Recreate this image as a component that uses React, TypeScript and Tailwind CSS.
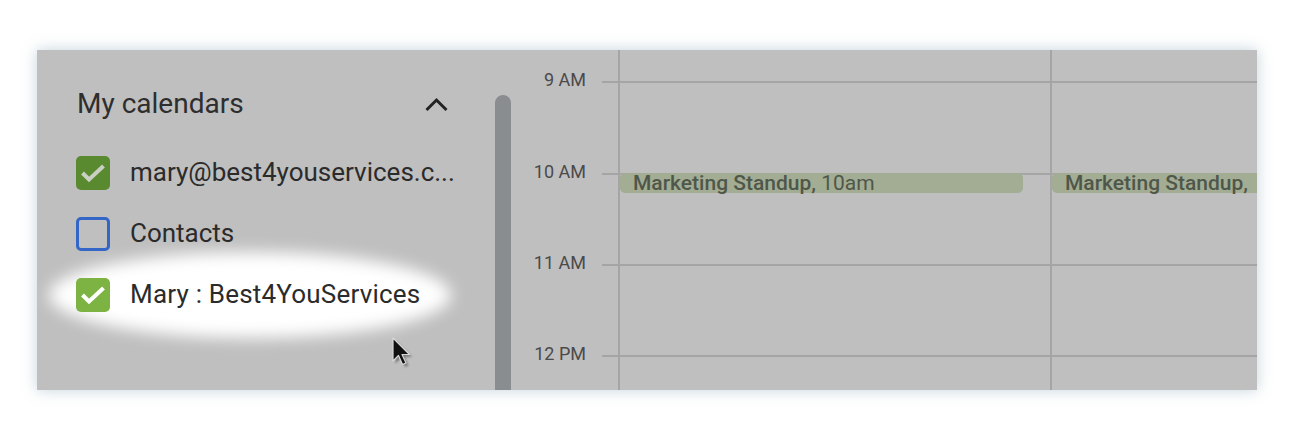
import React from "react";

function Check({ bg, tick }: { bg: string; tick: string }) {
  return (
    <div className={`w-[34px] h-[34px] rounded-[5px] shrink-0 ${bg}`}>
      <svg width="34" height="34" viewBox="0 0 34 34">
        <path d="M6.5 17 L13 23.5 L27.5 10" fill="none" stroke={tick} strokeWidth="4" strokeLinecap="butt" />
      </svg>
    </div>
  );
}

function TimeRow({ label, h, children }: { label: string; h: string; children?: React.ReactNode }) {
  return (
    <div className={`flex ${h} shrink-0`}>
      <div className="w-[107px] flex shrink-0">
        <div className="w-[75px] text-right text-[18px] leading-[24px] h-[24px] -mt-[13px] text-[#4a4a4a]">{label}</div>
        <div className="w-[16px]" />
        <div className="w-[16px] border-t-2 border-[#a5a5a5]" />
      </div>
      <div className="w-[432px] shrink-0 border-t-2 border-l-2 border-[#a5a5a5]">{children}</div>
      <div className="flex-1 border-t-2 border-l-2 border-[#a5a5a5] min-w-0">{children ? <Event short /> : null}</div>
    </div>
  );
}

function Event({ short }: { short?: boolean }) {
  return (
    <div
      className={`-mt-[2px] h-[20px] bg-[#a3ad94] text-[21px] leading-[20px] pl-[13px] whitespace-nowrap text-[#4f574a] ${
        short ? "rounded-l-[5px]" : "rounded-[5px] mr-[27px]"
      }`}
    >
      <span className="font-medium">Marketing Standup,</span>
      {short ? null : <span> 10am</span>}
    </div>
  );
}

export default function App() {
  return (
    <div className="w-[1295px] h-[440px] bg-white relative" style={{ fontFamily: "Roboto, 'Liberation Sans', sans-serif" }}>
      <div className="absolute left-[37px] top-[50px] w-[1220px] h-[340px] bg-[#bfbfbf] shadow-[0_0_14px_rgba(90,130,150,0.35)] overflow-hidden flex">
        {/* glow ellipse */}
        <div className="absolute left-[12px] top-[202px] w-[402px] h-[86px] rounded-[50%] bg-white blur-[8px]" />

        {/* sidebar */}
        <div className="relative w-[458px] shrink-0 pl-[40px] pt-[34px] flex flex-col">
          <div className="flex items-center justify-between w-[370px] h-[40px]">
            <span className="text-[28px] text-[#2e2e2e]">My calendars</span>
            <svg width="23" height="15" viewBox="0 0 23 15" className="-mr-[1px]">
              <polyline points="1.5,13 11.5,3 21.5,13" fill="none" stroke="#232323" strokeWidth="3" />
            </svg>
          </div>
          <div className="mt-[18px] flex flex-col">
            <div className="h-[61px] flex items-center gap-[20px] -ml-[1px]">
              <Check bg="bg-[#5a8a30]" tick="#c9cfc3" />
              <span className="text-[26px] text-[#2b2b2b] whitespace-nowrap">mary@best4youservices.c...</span>
            </div>
            <div className="h-[61px] flex items-center gap-[20px] -ml-[1px]">
              <div className="w-[34px] h-[34px] rounded-[5px] border-[3px] border-[#3366c6] shrink-0" />
              <span className="text-[26px] text-[#2b2b2b]">Contacts</span>
            </div>
            <div className="h-[61px] flex items-center gap-[20px] -ml-[1px]">
              <Check bg="bg-[#7cb342]" tick="#ffffff" />
              <span className="text-[26px] text-[#2b2b2b] tracking-[0.2px]">Mary : Best4YouServices</span>
            </div>
          </div>
        </div>

        {/* scrollbar */}
        <div className="w-[16px] shrink-0 mt-[45px] rounded-t-full bg-[#8a8d90]" />

        {/* grid */}
        <div className="flex-1 flex flex-col min-w-0">
          <div className="flex h-[31px] shrink-0">
            <div className="w-[107px] shrink-0" />
            <div className="w-[432px] shrink-0 border-l-2 border-[#a5a5a5]" />
            <div className="flex-1 border-l-2 border-[#a5a5a5]" />
          </div>
          <TimeRow label="9 AM" h="h-[92px]" />
          <TimeRow label="10 AM" h="h-[91px]">
            <Event />
          </TimeRow>
          <TimeRow label="11 AM" h="h-[91px]" />
          <TimeRow label="12 PM" h="h-[91px]" />
        </div>

        {/* cursor */}
        <svg className="absolute left-[354px] top-[286px]" width="24" height="34" viewBox="0 0 24 34">
          <defs>
            <filter id="cs" x="-30%" y="-30%" width="160%" height="160%">
              <feGaussianBlur stdDeviation="0.8" />
            </filter>
          </defs>
          <path d="M3 3 L3 26 L8.5 20.5 L12.5 29.5 L16 28 L12 19.5 L19.5 19.5 Z" fill="#000" opacity="0.35" filter="url(#cs)" transform="translate(1.5,1.5)" />
          <path d="M2 2 L2 25 L7.5 19.5 L11.5 28.5 L15 27 L11 18.5 L18.5 18.5 Z" fill="#111" stroke="#d8d8d8" strokeWidth="1.2" strokeLinejoin="round" />
        </svg>
      </div>
    </div>
  );
}
